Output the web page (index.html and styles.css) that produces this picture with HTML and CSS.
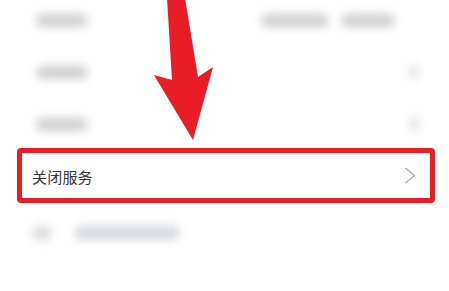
FILE: index.html
```html
<!DOCTYPE html>
<html lang="zh">
<head>
<meta charset="utf-8">
<link rel="stylesheet" href="styles.css">
</head>
<body>
<div class="page">
  <div class="list">
    <div class="row row-first">
      <span class="blob blob-label"></span>
      <span class="value-group">
        <span class="blob blob-v1"></span>
        <span class="blob blob-v2"></span>
      </span>
    </div>
    <div class="row">
      <span class="blob blob-label"></span>
      <span class="blob blob-chev"></span>
    </div>
    <div class="row">
      <span class="blob blob-label"></span>
      <span class="blob blob-chev"></span>
    </div>
    <div class="row row-highlight">
      <span class="label">关闭服务</span>
      <svg class="chevron" width="12" height="17" viewBox="0 0 12 17"><polyline points="1.5,1 10.5,8.5 1.5,16" fill="none" stroke="#a8a8a8" stroke-width="1.3"/></svg>
    </div>
    <div class="footer-row">
      <span class="blob blob-icon"></span>
      <span class="blob blob-link"></span>
    </div>
  </div>
  <svg class="arrow" width="449" height="160" viewBox="0 0 449 160">
    <polygon points="167,-2 185,-2 198,77 213,67 193,140 154,75 172,80" fill="#e81d26"/>
  </svg>
</div>
</body>
</html>
```

FILE: styles.css
```css
html, body {
  margin: 0;
  padding: 0;
  background: #ffffff;
}
.page {
  position: relative;
  width: 449px;
  height: 291px;
  overflow: hidden;
  background: #ffffff;
  font-family: "Noto Sans CJK SC", "Noto Sans", sans-serif;
}
.list {
  display: flex;
  flex-direction: column;
  margin-top: -6px;
}
.row {
  height: 52px;
  display: flex;
  align-items: center;
  justify-content: space-between;
  padding: 0 31px 0 36px;
}
.row-first {
  padding-right: 54px;
}
.value-group {
  display: flex;
  gap: 12px;
}
.blob {
  display: block;
  height: 13px;
  border-radius: 7px;
  background: #cfcfcf;
  filter: blur(5px);
}
.blob-label { width: 52px; }
.blob-v1 { width: 68px; }
.blob-v2 { width: 54px; }
.blob-chev { width: 8px; height: 14px; background: #e0e0e0; }
.row-highlight {
  height: 45px;
  margin: -2px 14px 0 17px;
  border: 5px solid #e81d26;
  border-radius: 4px;
  padding: 0 14px 0 10px;
}
.label {
  font-size: 15px;
  color: #333333;
  letter-spacing: 0.2px;
  margin-top: 2px;
}
.chevron {
  display: block;
}
.footer-row {
  display: flex;
  align-items: center;
  gap: 22px;
  height: 60px;
  padding-left: 32px;
}
.blob-icon {
  width: 20px;
  height: 14px;
  background: #dcdcdc;
}
.blob-link {
  width: 106px;
  height: 14px;
  background: #d3dae0;
}
.arrow {
  position: absolute;
  left: 0;
  top: 0;
}
```
